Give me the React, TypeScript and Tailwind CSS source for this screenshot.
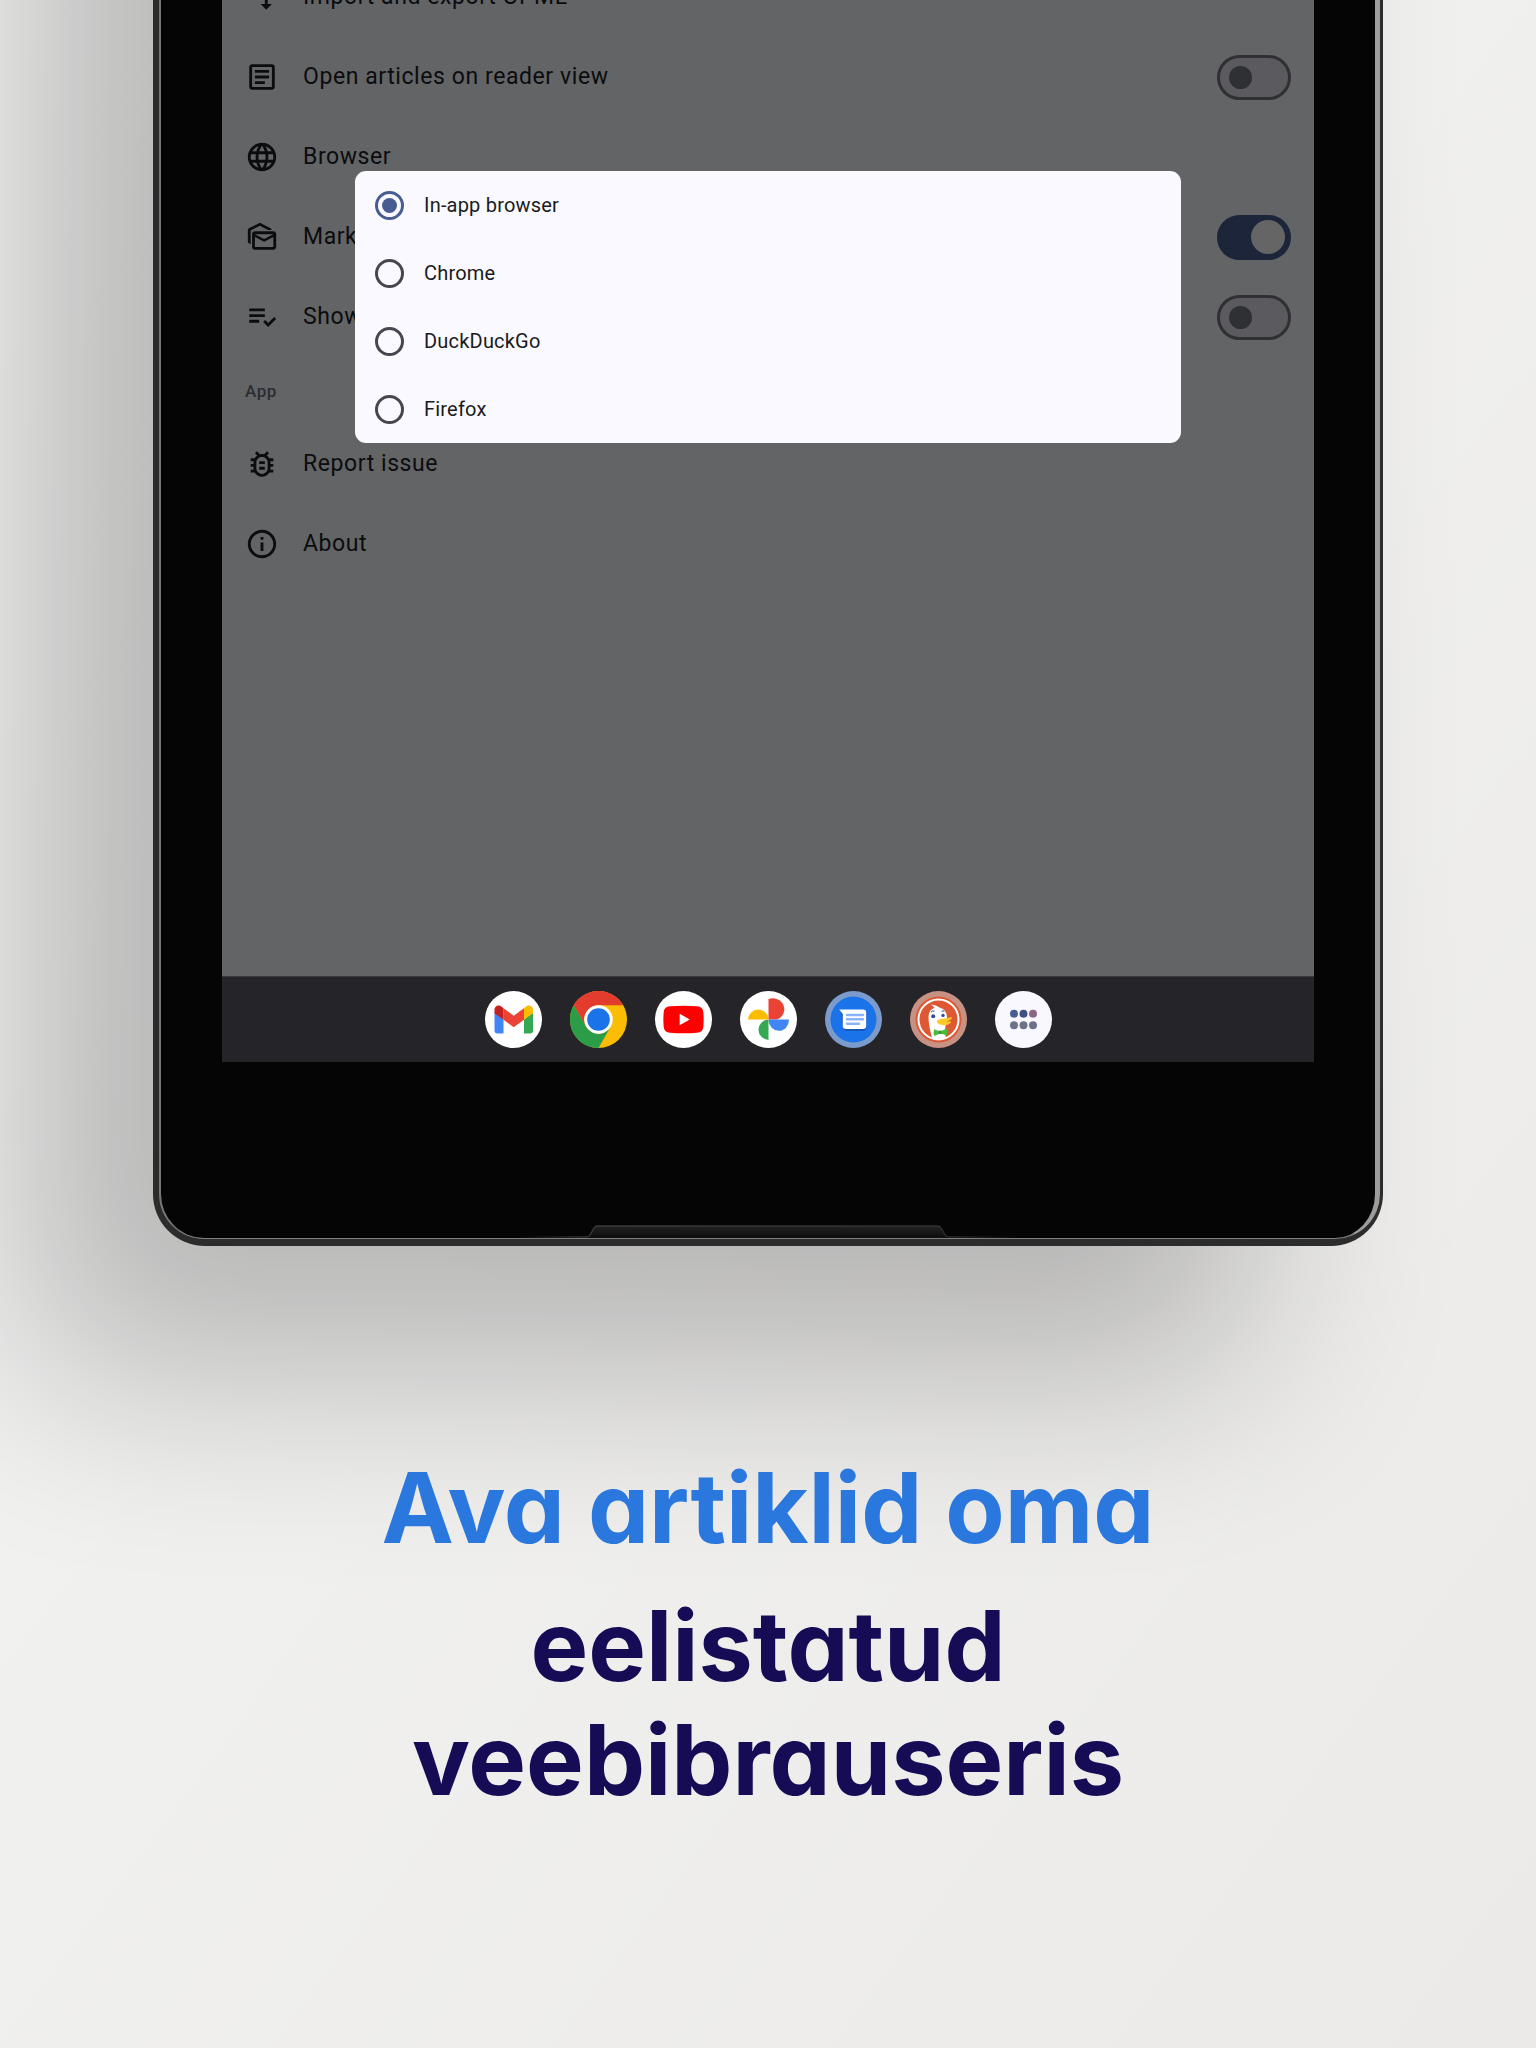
import type { ReactNode } from "react";
import type { IconType } from "react-icons";
import {
  MdImportExport,
  MdLanguage,
  MdOutlineArticle,
  MdOutlineBugReport,
  MdOutlineInfo,
  MdOutlineMarkAsUnread,
  MdPlaylistAddCheck,
} from "react-icons/md";

function Row({ icon: Icon, label }: { icon: IconType; label: string }) {
  return (
    <button type="button" className="flex h-20 w-full items-center gap-6 px-[23px] text-left">
      <Icon size={34} className="shrink-0" />
      <span>{label}</span>
    </button>
  );
}

function SwitchRow({ icon: Icon, label, on = false }: { icon: IconType; label: string; on?: boolean }) {
  return (
    <label className="flex h-20 w-full items-center gap-6 px-[23px]">
      <Icon size={34} className="shrink-0" />
      <span className="flex-1">{label}</span>
      <input
        type="checkbox"
        role="switch"
        defaultChecked={on}
        className="flex h-[45px] w-[74px] appearance-none items-center rounded-full border-3 border-[#2f3033] bg-[#5b5a5f] px-[9px] before:size-[23px] before:rounded-full before:bg-[#2f3033] checked:justify-end checked:border-[#1d253a] checked:bg-[#1d253a] checked:px-[3px] checked:before:size-[34px] checked:before:bg-[#656565]"
      />
    </label>
  );
}

function Choice({ label, selected = false }: { label: string; selected?: boolean }) {
  return (
    <label className="flex h-17 items-center gap-5 px-5">
      <input
        type="radio"
        name="browser"
        defaultChecked={selected}
        className="flex size-[29px] appearance-none items-center justify-center rounded-full border-3 border-[#45464f] checked:border-[#475d92] checked:before:size-[15px] checked:before:rounded-full checked:before:bg-[#475d92]"
      />
      <span>{label}</span>
    </label>
  );
}

function AppButton({ name, children }: { name: string; children: ReactNode }) {
  return (
    <button type="button" aria-label={name} className="size-[57px] shrink-0">
      <svg viewBox="0 0 57 57" className="size-full">
        {children}
      </svg>
    </button>
  );
}

function Taskbar() {
  return (
    <nav className="flex h-[86px] items-center justify-center gap-7 border-t border-[#3b3b3e] bg-[#252529]">
      <AppButton name="Gmail">
        <circle cx="28.5" cy="28.5" r="28.5" fill="#fff" />
        <path d="M9.5 21v18.500q0 3 3 3h6V28.500z" fill="#4285f4" />
        <path d="M48 21v18.500q0 3-3 3h-6V28.500z" fill="#34a853" />
        <path d="M18.500 17.200v11.500L28.700 36.200 39 28.700V17.200l-10.300 7.600z" fill="#ea4335" />
        <path d="M9.500 18.500v3.700l9 6.500V17.200l-1.500-1.200c-3.500-3-7.500-.8-7.500 2.500z" fill="#c5221f" />
        <path d="M48 18.500v3.700l-9 6.500V17.200l1.500-1.200c3.500-3 7.500-.8 7.500 2.500z" fill="#fbbc04" />
      </AppButton>
      <AppButton name="Chrome">
        <circle cx="28.500" cy="28.500" r="28.500" fill="#fbbc04" />
        <path d="M28.500 14.250H53.180A28.500 28.500 0 0 0 3.820 14.250L16.160 35.620A14.250 14.250 0 0 1 28.500 14.250z" fill="#e33b2e" />
        <path d="M16.160 35.620L3.820 14.250A28.500 28.500 0 0 0 28.500 57L40.840 35.620A14.250 14.250 0 0 1 16.160 35.620z" fill="#2b9c48" />
        <circle cx="28.500" cy="28.500" r="14.250" fill="#fff" />
        <circle cx="28.500" cy="28.500" r="11.300" fill="#1a73e8" />
      </AppButton>
      <AppButton name="YouTube">
        <circle cx="28.500" cy="28.500" r="28.500" fill="#fff" />
        <path d="M15 15.200q13.500-1 27 0 6 .3 6.300 6 .7 7.300 0 14.600-.3 5.700-6.300 6-13.500 1-27 0-6-.3-6.300-6-.7-7.300 0-14.600.3-5.700 6.300-6z" fill="#f00" />
        <path d="M24.700 22.700v11.600l10-5.800z" fill="#fff" />
      </AppButton>
      <AppButton name="Photos">
        <circle cx="28.500" cy="28.500" r="28.500" fill="#fff" />
        <path d="M28.500 8v20.500h8.500A11 10.500 0 0 0 28.500 8z" fill="#ea4335" />
        <path d="M49 28.500H28.500V29A10.200 11 0 0 0 49 28.500z" fill="#4285f4" />
        <path d="M28.500 49V28.500h-.5A10.800 10.300 0 0 0 28.500 49z" fill="#34a853" />
        <path d="M8 28.500h20.500V28A10.300 10.800 0 0 0 8 28.500z" fill="#fbbc04" />
      </AppButton>
      <AppButton name="Messages">
        <circle cx="28.500" cy="28.500" r="28.500" fill="#7a9bcc" />
        <circle cx="28.500" cy="28.500" r="23" fill="#1a73e8" />
        <path d="M16 21l2 15q.5 3.500 3.500 4H38q3.500-.5 3.500-4V22z" fill="#1559b7" />
        <path d="M14.200 18.500H38q3.200 0 3.200 3.200v13q0 3.200-3.200 3.200H21q-3.200 0-3.200-3.200V23z" fill="#fff" />
        <path d="M22 24h16M22 28.300h16M22 32.800h12" stroke="#8ab4f8" strokeWidth="2.400" strokeLinecap="round" />
      </AppButton>
      <AppButton name="DuckDuckGo">
        <circle cx="28.500" cy="28.500" r="28.500" fill="#c79183" />
        <circle cx="28.500" cy="28.500" r="23" fill="#de5833" />
        <circle cx="28.500" cy="28.500" r="20" fill="none" stroke="#fff" strokeWidth="2" />
        <path d="M21 13.500q5.500.3 8.500 3c5.500 1.500 7.500 5 7.500 10.500l-2 11q-1 5 1.500 9.500-7.500 3-14.500-.5c-1.500-7-3.500-13.500-3.500-20.500 0-5 2-8.500 6-9.500q-1-2-3.500-3.500z" fill="#fff" />
        <path d="M27 29.800q2.500-2.500 8-2.400l6-1.200q1.700 0 .4 1.700-2 2-6.400 2.700h5.500q1.500.3-.2 1.700-3.300 2.500-8.300 1.600-6-1-5-4.100z" fill="#fdc928" />
        <circle cx="23.200" cy="25.200" r="2" fill="#2d4f8e" />
        <circle cx="33" cy="24.400" r="1.700" fill="#2d4f8e" />
        <path d="M21 21q1.500-1.500 3.500-1M31.500 20.300q1.500-1 3 0" stroke="#2d4f8e" strokeWidth="1" fill="none" />
        <path d="M24 38.200l6 2.200 7-2.800q.7 3.600 0 7l-6.500-2-6.500 2.500q-.7-3.500 0-6.900z" fill="#4cba3c" />
        <path d="M28.500 39.600h3v3.400h-3z" fill="#3a9b31" />
      </AppButton>
      <AppButton name="All apps">
        <circle cx="28.500" cy="28.500" r="28.500" fill="#f9f8ff" />
        <circle cx="19" cy="22.800" r="4" fill="#475d92" />
        <circle cx="28.500" cy="22.800" r="4" fill="#3d5086" />
        <circle cx="38" cy="22.800" r="4" fill="#8a6588" />
        <circle cx="19" cy="34.200" r="4" fill="#6d7386" />
        <circle cx="28.500" cy="34.200" r="4" fill="#6d7386" />
        <circle cx="38" cy="34.200" r="4" fill="#6d7386" />
      </AppButton>
    </nav>
  );
}

function Dock() {
  return (
    <svg viewBox="0 0 496 15" className="h-[15px] w-[496px]" fill="none" aria-hidden="true">
      <defs>
        <linearGradient id="dock" x1="0" y1="0" x2="0" y2="1">
          <stop offset="0" stopColor="#232323" />
          <stop offset="1" stopColor="#0c0c0c" />
        </linearGradient>
        <linearGradient id="ridge" x1="0" y1="0" x2="496" y2="0" gradientUnits="userSpaceOnUse">
          <stop offset="0" stopColor="#3a3a3a" stopOpacity="0" />
          <stop offset="0.150" stopColor="#3a3a3a" />
          <stop offset="0.850" stopColor="#303030" />
          <stop offset="1" stopColor="#303030" stopOpacity="0" />
        </linearGradient>
      </defs>
      <path d="M69 15l5-9q1-3 4-3h339q3 0 4 3l5 9z" fill="url(#dock)" />
      <path d="M0 14h66q3 0 4-2l4-7q1-2 4-2h339q3 0 4 2l4 7q1 2 4 2h67" stroke="url(#ridge)" strokeWidth="1.500" />
    </svg>
  );
}

export default function App() {
  return (
    <main className="flex min-h-screen flex-col overflow-hidden bg-linear-to-br from-[#f5f5f4] to-[#ebeae8] font-[Roboto,sans-serif]">
      <div className="mx-[153px] -mt-[480px] rounded-b-[52px] bg-[#2c2c2c] pr-[3px] pb-[7px] pl-[6px] shadow-[-130px_130px_200px_rgba(0,0,0,0.24)]">
        <div className="flex flex-col items-center rounded-b-[45px] border-r-[5px] border-b border-l-2 border-r-[#9c9c9c] border-b-[#808080] border-l-[#777777] bg-[#050505]">
          <div className="relative w-full px-[61px]">
            <section className="bg-[#636466] pt-[437px] pb-[392px] text-[23px] leading-8 tracking-wide text-[#0b0c0e]">
              <Row icon={MdImportExport} label="Import and export OPML" />
              <SwitchRow icon={MdOutlineArticle} label="Open articles on reader view" />
              <Row icon={MdLanguage} label="Browser" />
              <SwitchRow icon={MdOutlineMarkAsUnread} label="Mark" on />
              <SwitchRow icon={MdPlaylistAddCheck} label="Show" />
              <h2 className="flex h-[67px] items-center px-[23px] text-[17px] font-medium text-[#2b2c33]">App</h2>
              <Row icon={MdOutlineBugReport} label="Report issue" />
              <Row icon={MdOutlineInfo} label="About" />
            </section>
            <Taskbar />
            <div
              role="dialog"
              aria-label="Browser"
              className="absolute inset-x-[194px] top-[651px] rounded-[11px] bg-[#f9f9ff] text-xl tracking-[0.01em] text-[#1a1b20]"
            >
              <Choice label="In-app browser" selected />
              <Choice label="Chrome" />
              <Choice label="DuckDuckGo" />
              <Choice label="Firefox" />
            </div>
          </div>
          <div className="flex h-44 items-end">
            <Dock />
          </div>
        </div>
      </div>
      <h1 className="pt-[205px] text-center font-[Inter,sans-serif] text-[97px] leading-[114px] font-bold [font-feature-settings:'cv11']">
        <span className="block pb-6 text-[#2a78dd]">Ava artiklid oma</span>
        <span className="block text-[#150c55]">
          eelistatud
          <br />
          veebibrauseris
        </span>
      </h1>
    </main>
  );
}
